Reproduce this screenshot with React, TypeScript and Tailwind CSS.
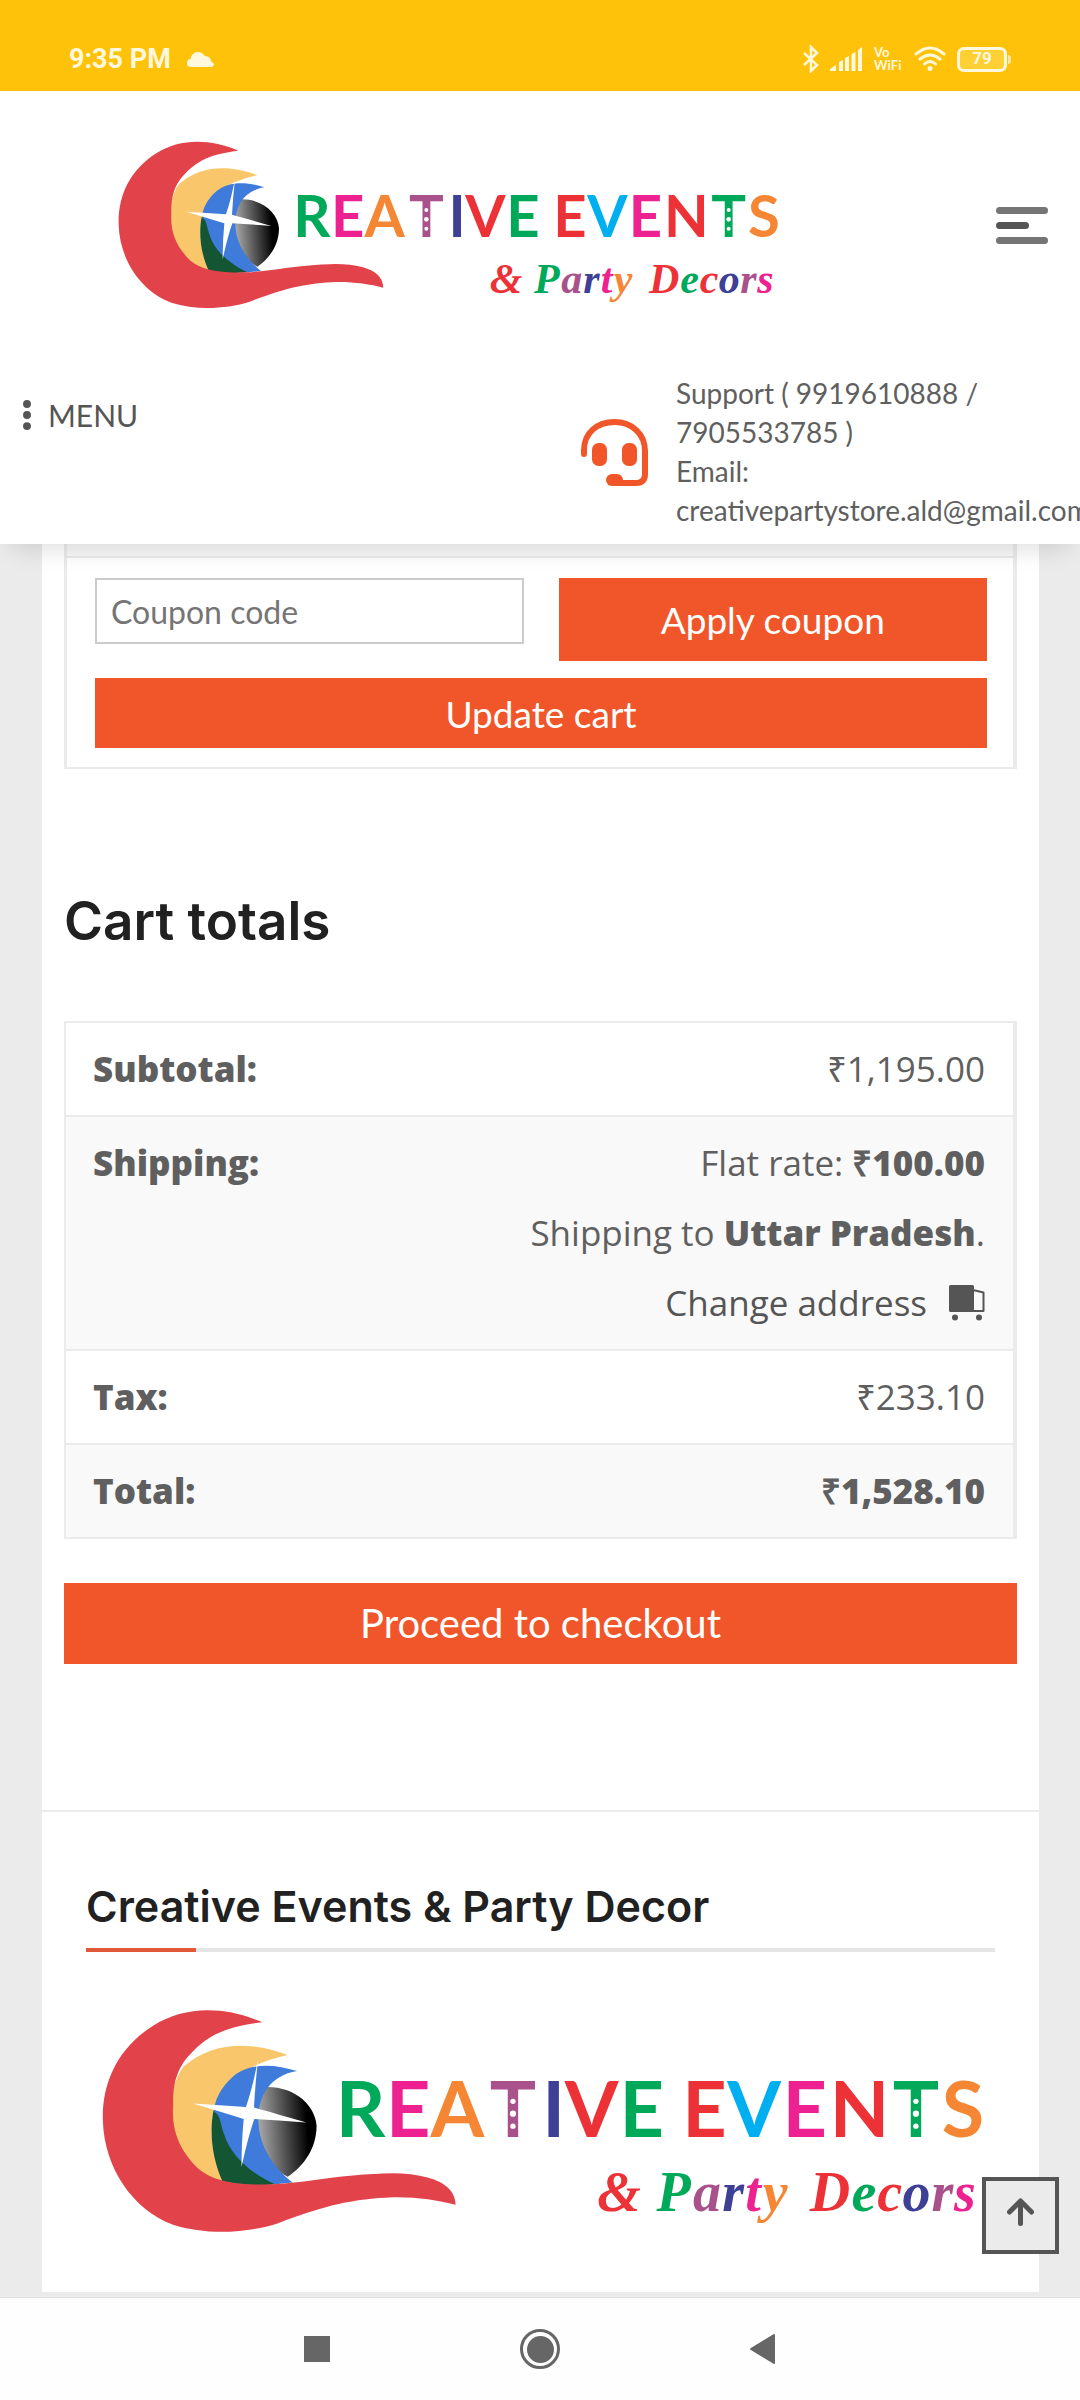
import { MoreVertical } from "lucide-react";
import type { ReactNode } from "react";

const headline = [
  { char: "R", x: 637, color: "#00a859" },
  { char: "E", x: 744, color: "#ed2290" },
  { char: "A", x: 855, color: "#f58634" },
  { char: "T", x: 980, color: "#a8518a" },
  { char: "I", x: 1072, color: "#3e4095" },
  { char: "V", x: 1157, color: "#ed3237" },
  { char: "E", x: 1270, color: "#00a859" },
  { char: "E", x: 1411, color: "#ed3237" },
  { char: "V", x: 1523, color: "#00afef" },
  { char: "E", x: 1637, color: "#ed2290" },
  { char: "N", x: 1760, color: "#ed3237" },
  { char: "T", x: 1887, color: "#00a859" },
  { char: "S", x: 1993, color: "#f58634" },
];

const tagline = [
  { char: "&", x: 1170, color: "#ed3237" },
  { char: "P", x: 1303, color: "#00a859" },
  { char: "a", x: 1385, color: "#a8518a" },
  { char: "r", x: 1451, color: "#3e4095" },
  { char: "t", x: 1503, color: "#ed2290" },
  { char: "y", x: 1542, color: "#f58634" },
  { char: "D", x: 1648, color: "#ed3237" },
  { char: "e", x: 1742, color: "#00a859" },
  { char: "c", x: 1800, color: "#ed3237" },
  { char: "o", x: 1857, color: "#3e4095" },
  { char: "r", x: 1922, color: "#a8518a" },
  { char: "s", x: 1973, color: "#ed2290" },
];

interface LogoProps {
  id: string;
  className: string;
}

function Logo({ id, className }: LogoProps) {
  return (
    <svg viewBox="19 60 2046 520" className={className} role="img" aria-label="Creative Events & Party Decors">
      <defs>
        <linearGradient id={id} x1="0" y1="0.5" x2="1" y2="0.4">
          <stop offset="0" stopColor="#b5b5b5" />
          <stop offset="0.35" stopColor="#6b6b6b" />
          <stop offset="0.85" stopColor="#000" />
        </linearGradient>
      </defs>
      <path fill="#f9c66b" d="M473 166C400 138 310 130 238 192C205 240 205 300 217 350C235 415 280 445 335 456C310 400 300 370 302 330C304 270 325 235 365 208C395 190 430 175 473 166Z" />
      <path fill={`url(#${id})`} d="M420 238C490 235 535 280 538 325C538 375 510 415 473 440C425 415 395 350 400 300C402 275 410 255 420 238Z" />
      <path fill="#145634" d="M306 290C296 340 303 400 327 452C360 462 410 460 447 457C370 420 340 370 325 290Z" />
      <path fill="#3f7bdb" d="M494 202C440 184 385 184 350 214C318 242 306 275 308 294C322 300 322 325 330 345C345 395 395 435 445 457L484 453C430 410 407 360 407 310C407 255 435 212 494 202Z" />
      <path fill="#e2434b" d="M416 92C330 55 240 55 170 100C90 150 54 230 57 315C60 420 125 515 215 548C290 572 380 567 450 545C560 503 620 490 710 486C760 485 810 492 851 503C850 470 825 452 790 442C740 428 690 431 620 437C550 443 510 453 440 457C340 460 300 445 270 420C225 375 212 330 215 280C214 240 220 210 240 180C280 130 320 103 416 92Z" />
      <path fill="#fff" d="M406 176Q400 230 397 284Q440 296 515 318Q450 313 398 310Q385 345 369 418Q369 360 374 310Q330 296 260 275Q320 279 379 283Q395 235 406 176Z" />
      <text y="350" fontSize="174" fontWeight="700" textAnchor="middle" fontFamily="Lato, sans-serif">
        {headline.map((l) => (
          <tspan key={l.x} x={l.x} fill={l.color}>
            {l.char}
          </tspan>
        ))}
      </text>
      <g fill="#fff">
        <circle cx="980" cy="270" r="6" />
        <circle cx="980" cy="298" r="7" />
        <circle cx="980" cy="326" r="6" />
        <circle cx="1887" cy="270" r="6" />
        <circle cx="1887" cy="298" r="7" />
        <circle cx="1887" cy="326" r="6" />
      </g>
      <text y="518" fontSize="126" fontWeight="700" fontStyle="italic" fontFamily="'Liberation Serif', serif">
        {tagline.map((l) => (
          <tspan key={l.x} x={l.x} fill={l.color}>
            {l.char}
          </tspan>
        ))}
      </text>
    </svg>
  );
}

function StatusBar() {
  return (
    <div className="flex h-[91px] items-end justify-between bg-[#ffc20a] pr-[69px] pb-[18px] pl-[69px] text-[#fff8dc]">
      <div className="flex items-center gap-4">
        <span className="font-[Roboto] text-[27px] leading-7 font-bold">9:35 PM</span>
        <svg viewBox="0 0 27 15" className="h-[15px] w-[27px]" fill="currentColor">
          <circle cx="4" cy="11" r="4" />
          <circle cx="11" cy="7.500" r="7.500" />
          <circle cx="18.500" cy="9.500" r="5.500" />
          <path d="M4 8H21Q27 10 27 13Q26 15 24 15H4Z" />
        </svg>
      </div>
      <div className="flex h-7 items-center gap-[11px]">
        <svg viewBox="0 0 16 28" className="h-7 w-4" fill="none" stroke="currentColor" strokeWidth="2.500">
          <path d="M1 8L14 20L8 26V2L14 8L1 20" />
        </svg>
        <svg viewBox="0 0 33 24" className="h-6 w-[33px]" fill="currentColor">
          <path d="M0 24V22L6 18V24ZM9 24V15L13 13V24ZM15 24V11L19 9V24ZM21.500 24V7L25.500 5V24ZM28 24V3L32 0V24Z" />
        </svg>
        <span className="w-[29px] font-[Lato] text-[13px] leading-[13px] font-bold">
          Vo
          <br />
          WiFi
        </span>
        <svg viewBox="0 0 32 26" className="h-[26px] w-8" fill="none" stroke="currentColor" strokeWidth="3" strokeLinecap="round">
          <path d="M2 8Q16 -4 30 8M6 13Q16 5 26 13M10.500 18Q16 13 21.500 18" />
          <circle cx="16" cy="22.500" r="1.500" fill="currentColor" strokeWidth="2" />
        </svg>
        <div className="flex items-center gap-px">
          <div className="flex h-[25px] w-[50px] items-center justify-center rounded-[7px] border-[3px] border-current bg-[#ffd034]">
            <span className="font-[Roboto] text-[17px] font-bold">79</span>
          </div>
          <div className="h-[9px] w-[3px] rounded-r bg-current opacity-70" />
        </div>
      </div>
    </div>
  );
}

function HeadsetIcon() {
  return (
    <svg viewBox="0 0 67 67" className="h-[67px] w-[67px] shrink-0" fill="#f1562a">
      <path
        d="M3 35V31C3 14 16 3 33.500 3S64 15 64 32V55Q64 64 55 64H34"
        fill="none"
        stroke="#f1562a"
        strokeWidth="6"
        strokeLinecap="round"
      />
      <rect x="11" y="24" width="15" height="23" rx="6.500" />
      <rect x="41" y="24" width="15" height="23" rx="6.500" />
      <rect x="25" y="55" width="17" height="12" rx="6" />
    </svg>
  );
}

function Header() {
  return (
    <header className="relative z-10 bg-white pb-[14px] shadow-[0_16px_24px_-12px_rgba(0,0,0,0.14)]">
      <div className="flex items-start justify-between pt-[49px] pr-8 pl-[106px]">
        <a href="#home" className="w-[682px]">
          <Logo id="headerLens" className="w-full" />
        </a>
        <button aria-label="Open navigation" className="mt-[67px] flex w-[52px] flex-col gap-2">
          <span className="h-[7px] w-full rounded-full bg-[#757575]" />
          <span className="h-[7px] w-[33px] rounded-full bg-[#555]" />
          <span className="h-[7px] w-full rounded-full bg-[#757575]" />
        </button>
      </div>
      <div className="mt-[61px] flex items-start justify-between">
        <button className="mt-5 ml-2 flex items-center text-[30px] leading-[42px] text-[#555]">
          <MoreVertical className="mr-[2px] h-[38px] w-[38px]" fill="currentColor" strokeWidth={3} />
          MENU
        </button>
        <div className="flex w-[499px] items-center gap-[28px]">
          <HeadsetIcon />
          <p className="text-[28px] leading-[39px] whitespace-nowrap text-[#5f5f5f]">
            Support ( 9919610888 /<br />
            7905533785 )<br />
            Email:
            <br />
            creativepartystore.ald@gmail.com
          </p>
        </div>
      </div>
    </header>
  );
}

function CouponForm() {
  return (
    <form className="border-2 border-t-0 border-l-[3px] border-r-4 border-[#ebebeb]" onSubmit={(e) => e.preventDefault()}>
      <div className="h-[14px] border-b-2 border-[#ebebeb] bg-[#f8f8f8]" />
      <div className="grid grid-cols-2 items-start gap-x-[35px] gap-y-[17px] pt-5 pr-[26px] pb-[19px] pl-[28px]">
        <input
          type="text"
          aria-label="Coupon code"
          placeholder="Coupon code"
          className="h-[66px] w-full border-2 border-[#ccc] px-[14px] text-[32px] text-[#5f5f5f] placeholder:text-[#757575]"
        />
        <button className="h-[83px] bg-[#f1562a] text-[37px] text-white">Apply coupon</button>
        <button className="col-span-2 h-[70px] bg-[#f1562a] text-[37px] text-white">Update cart</button>
      </div>
    </form>
  );
}

interface TotalRowProps {
  label: string;
  children: ReactNode;
}

function TotalRow({ label, children }: TotalRowProps) {
  return (
    <tr className="border-b-2 border-[#ebebeb] align-top even:bg-[#f9f9f9]">
      <th scope="row" className="py-[11px] pl-[27px] text-left font-extrabold">
        {label}
      </th>
      <td className="py-[11px] pr-[28px] text-right">{children}</td>
    </tr>
  );
}

function TruckIcon() {
  return (
    <svg viewBox="0 0 36 36" className="h-9 w-9" fill="currentColor">
      <rect x="0" y="0" width="25" height="27" rx="1.500" />
      <path d="M24 5L34.500 7.500V26H24" fill="none" stroke="currentColor" strokeWidth="2" strokeLinejoin="round" />
      <circle cx="6" cy="32.500" r="3" />
      <circle cx="30" cy="32.500" r="3" />
    </svg>
  );
}

function CartTotals() {
  return (
    <section className="mt-[116px]">
      <h2 className="font-[Inter] text-[53px] leading-[72px] font-semibold text-[#212121]">Cart totals</h2>
      <table className="mt-16 w-full border-2 border-r-4 border-[#ebebeb] font-[Open_Sans,sans-serif] text-[35px] leading-[70px] text-[#5f5f5f]">
        <tbody>
          <TotalRow label="Subtotal:">₹1,195.00</TotalRow>
          <TotalRow label="Shipping:">
            <p>
              Flat rate: <b className="font-extrabold">₹100.00</b>
            </p>
            <p>
              Shipping to <b className="font-extrabold">Uttar Pradesh</b>.
            </p>
            <a href="#address" className="flex items-center justify-end gap-[22px] text-[#555]">
              Change address
              <TruckIcon />
            </a>
          </TotalRow>
          <TotalRow label="Tax:">₹233.10</TotalRow>
          <TotalRow label="Total:">
            <b className="font-extrabold">₹1,528.10</b>
          </TotalRow>
        </tbody>
      </table>
      <a href="#checkout" className="mt-11 block bg-[#f1562a] text-center text-[40px] leading-[81px] text-white">
        Proceed to checkout
      </a>
    </section>
  );
}

function StoreFooter() {
  return (
    <footer className="mt-[146px] border-t-2 border-[#ebebeb] px-11 pb-[53px]">
      <h3 className="mt-[66px] font-[Inter] text-[43px] leading-[56px] font-semibold text-[#212121]">
        Creative Events &amp; Party Decor
      </h3>
      <div className="mt-[14px] h-1 bg-[#e5e5e5]">
        <div className="h-full w-[110px] bg-[#e2583a]" />
      </div>
      <Logo id="footerLens" className="mt-[56px] w-full" />
    </footer>
  );
}

function NavigationBar() {
  return (
    <nav className="flex h-[103px] items-center justify-center gap-[190px] border-t border-[#e0e0e0] bg-[#fefefe]">
      <button aria-label="Recent apps" className="h-[26px] w-[26px] bg-[#666]" />
      <button aria-label="Home" className="flex h-10 w-10 items-center justify-center rounded-full border-[3px] border-[#666]">
        <span className="h-[27px] w-[27px] rounded-full bg-[#666]" />
      </button>
      <button aria-label="Back">
        <svg viewBox="0 0 26 30" className="h-[30px] w-[26px]" fill="#666" stroke="#666" strokeWidth="2" strokeLinejoin="round">
          <path d="M24 1V29L1 15Z" />
        </svg>
      </button>
    </nav>
  );
}

export default function App() {
  return (
    <div className="flex min-h-screen flex-col overflow-x-hidden bg-[#ebebeb] font-[Lato,sans-serif]">
      <StatusBar />
      <Header />
      <main className="mr-[41px] ml-[42px] bg-white">
        <div className="px-[22px]">
          <CouponForm />
          <CartTotals />
        </div>
        <StoreFooter />
      </main>
      <div className="mt-auto">
        <NavigationBar />
      </div>
      <a
        href="#top"
        aria-label="Back to top"
        className="fixed right-[21px] bottom-[146px] z-20 flex h-[77px] w-[77px] items-center justify-center border-4 border-[#555] bg-[#ebebeb] pb-2"
      >
        <svg viewBox="0 0 27 28" className="h-7 w-[27px]" fill="none" stroke="#555" strokeWidth="5" strokeLinecap="round" strokeLinejoin="round">
          <path d="M13.500 25.500V3M2.500 14L13.500 3L24.500 14" />
        </svg>
      </a>
    </div>
  );
}
